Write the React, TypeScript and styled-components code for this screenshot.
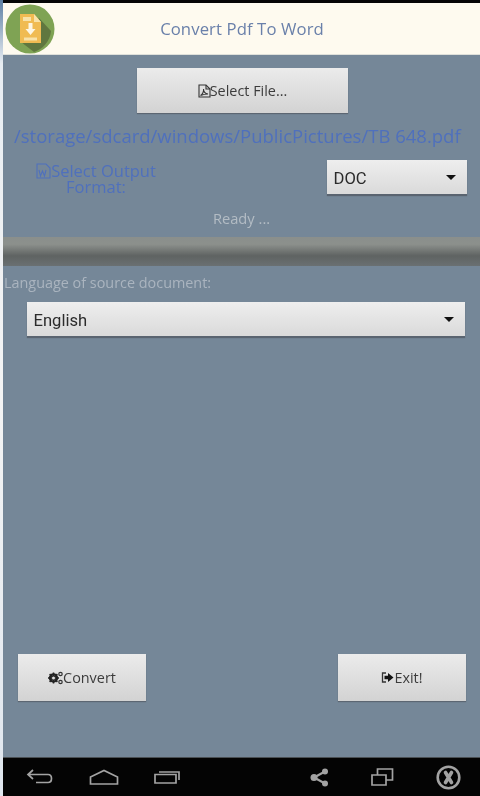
import React from "react";
import styled, { createGlobalStyle } from "styled-components";

const GlobalStyle = createGlobalStyle`
  html, body {
    margin: 0;
    padding: 0;
    background: #000;
  }
  #root {
    width: 480px;
    height: 796px;
    overflow: hidden;
  }
`;

const Screen = styled.div`
  width: 480px;
  height: 796px;
  display: flex;
  font-family: "Open Sans", "Noto Sans", sans-serif;
  filter: blur(0.5px);
`;

const EdgeStrip = styled.div`
  width: 3px;
  flex: none;
  background: linear-gradient(#5d7fa3 0, #e8edf2 8%, #f4f4f4 50%, #dfe6ee 100%);
`;

const Main = styled.div`
  flex: 1;
  min-width: 0;
  display: flex;
  flex-direction: column;
`;

const StatusEdge = styled.div`
  height: 3px;
  flex: none;
  background: #050505;
`;

const Header = styled.header`
  height: 52px;
  flex: none;
  display: flex;
  align-items: center;
  background: #fefaef;
  border-bottom: 1px solid #dfe0da;
  box-sizing: border-box;
  position: relative;
`;

const Logo = styled.svg`
  position: absolute;
  left: 2px;
  top: 1px;
  width: 50px;
  height: 50px;
`;

const Title = styled.h1`
  margin: 0;
  width: 100%;
  padding-left: 1px;
  box-sizing: border-box;
  text-align: center;
  font-size: 16.7px;
  font-weight: 400;
  letter-spacing: 0.1px;
  color: #6a80aa;
`;

const Content = styled.main`
  flex: 1;
  min-height: 0;
  display: flex;
  flex-direction: column;
  background: #758798;
`;

const RaisedButton = styled.button<{ $width: number; $height: number }>`
  width: ${(p) => p.$width}px;
  height: ${(p) => p.$height}px;
  padding: 0;
  border: none;
  display: flex;
  align-items: center;
  justify-content: center;
  font-family: inherit;
  font-size: 14.4px;
  color: #3c3c3c;
  background: linear-gradient(#ebebeb, #d3d3d3);
  box-shadow: 0 1px 1px #5c6672;
`;

const FileRow = styled.div`
  display: flex;
  justify-content: center;
  padding: 13px 0 0 2px;
`;

const PathText = styled.div`
  margin-top: 10px;
  padding-left: 11px;
  height: 25px;
  line-height: 25px;
  font-size: 18.5px;
  white-space: nowrap;
  color: #4f70bd;
`;

const FormatRow = styled.div`
  display: flex;
  align-items: flex-start;
  margin-top: 12px;
  height: 36px;
`;

const FormatLabel = styled.div`
  width: 186px;
  margin-right: 138px;
  padding-top: 3px;
  text-align: center;
  font-size: 16.5px;
  line-height: 16px;
  color: #4f70bd;
`;

const Spinner = styled.div<{ $width: number; $height: number }>`
  width: ${(p) => p.$width}px;
  height: ${(p) => p.$height}px;
  flex: none;
  display: flex;
  align-items: center;
  justify-content: space-between;
  box-sizing: border-box;
  padding: 2px 11px 0 6.5px;
  font-family: Roboto, sans-serif;
  font-size: 16.6px;
  color: #2b2b2b;
  background: linear-gradient(#eeeeee, #dadada);
  box-shadow: 0 2px 1px #5a6470;
`;

const Caret = styled.span`
  width: 0;
  height: 0;
  margin-top: -2px;
  border-left: 5px solid transparent;
  border-right: 5px solid transparent;
  border-top: 5px solid #111;
`;

const Status = styled.div`
  margin-top: 12px;
  height: 20px;
  line-height: 20px;
  text-align: center;
  font-size: 14.7px;
  color: #b3bcc4;
`;

const ProgressBar = styled.div`
  margin-top: 9px;
  height: 29px;
  background: linear-gradient(#8a8f8c 0, #8c908c 25%, #5f6362 65%, #6a7072 100%);
`;

const SourceLabel = styled.div`
  margin-top: 7px;
  padding-left: 1px;
  height: 20px;
  line-height: 20px;
  font-size: 14.4px;
  color: #aab4bf;
`;

const SourceRow = styled.div`
  margin-top: 9px;
  padding-left: 24px;
`;

const ActionRow = styled.div`
  margin-top: auto;
  display: flex;
  justify-content: space-between;
  padding: 0 14px 56px 15px;
`;

const NavBar = styled.nav`
  height: 39px;
  flex: none;
  display: flex;
  align-items: center;
  background: #040404;
  border-top: 1px solid #4a4f53;
  box-sizing: border-box;
`;

const NavCluster = styled.div<{ $gap: number; $left: number }>`
  display: flex;
  align-items: center;
  gap: ${(p) => p.$gap}px;
  margin-left: ${(p) => p.$left}px;
`;

const NavIcon = styled.svg`
  display: block;
  fill: none;
  stroke: #a3a3a3;
  stroke-width: 1.7;
`;

const InlineIcon = styled.svg`
  display: block;
  flex: none;
`;

const OverlapIcon = styled(InlineIcon)`
  margin-right: -1px;
`;

const FormatIcon = styled.svg`
  display: inline-block;
  vertical-align: -2px;
`;

const PdfIcon = () => (
  <OverlapIcon width="13" height="14" viewBox="0 0 13 14" fill="none" stroke="#333" strokeWidth="1.1">
    <path d="M1 1h7l4 4v8H1z" />
    <path d="M8 1v4h4" />
    <path d="M2.500 11.500c2-1 3.500-4 3-6.500 0 3 1.500 4.500 4.500 5-3 0-5 .5-7.500 1.500z" />
  </OverlapIcon>
);

const WordIcon = () => (
  <FormatIcon width="15" height="16" viewBox="0 0 15 16" fill="none" stroke="#4f70bd" strokeWidth="1.1">
    <path d="M1 1h9l4 4v10H1z" />
    <path d="M3 7l1.500 6 2-5 2 5L10 7" />
  </FormatIcon>
);

const GearsIcon = () => (
  <InlineIcon width="15" height="14" viewBox="0 0 15 14">
    <circle cx="5.500" cy="7" r="3.600" fill="none" stroke="#222" strokeWidth="2.200" />
    <path d="M5.500 1.500v11M0 7h11M1.600 3.100l7.800 7.800M9.400 3.100l-7.800 7.800" stroke="#222" strokeWidth="1.500" />
    <circle cx="5.500" cy="7" r="1.500" fill="#e0e0e0" />
    <circle cx="12.500" cy="3" r="1.700" fill="none" stroke="#333" strokeWidth="1.200" />
    <circle cx="12.500" cy="11" r="1.700" fill="none" stroke="#333" strokeWidth="1.200" />
  </InlineIcon>
);

const ExitIcon = () => (
  <InlineIcon width="13" height="11" viewBox="0 0 13 11">
    <path d="M5 1H1.500v9H5" fill="none" stroke="#333" strokeWidth="1.300" />
    <path d="M3.500 3.800H7V1l5.500 4.500L7 10V7.200H3.500z" fill="#111" />
  </InlineIcon>
);

const AppLogo = () => (
  <Logo viewBox="0 0 50 50">
    <circle cx="25" cy="25" r="24.500" fill="#7fa354" />
    <path d="M34 14l12 13a24.500 24.500 0 0 1-17 21L16 38z" fill="#60773f" />
    <path d="M15 10h14l7 8v21H15z" fill="#f0bb52" />
    <path d="M29 10l7 8h-7z" fill="#f8e2a8" />
    <rect x="18" y="13" width="8" height="4" fill="#f8e2a8" />
    <path d="M23.500 19h4v6h3l-5 6-5-6h3z" fill="#fdf6e3" />
    <rect x="19" y="33.500" width="13" height="3" fill="#f8e2a8" />
  </Logo>
);

export default function App() {
  return (
    <Screen>
      <GlobalStyle />
      <EdgeStrip />
      <Main>
        <StatusEdge />
        <Header>
          <AppLogo />
          <Title>Convert Pdf To Word</Title>
        </Header>
        <Content>
          <FileRow>
            <RaisedButton $width={211} $height={45}>
              <PdfIcon />
              Select File...
            </RaisedButton>
          </FileRow>
          <PathText>/storage/sdcard/windows/PublicPictures/TB 648.pdf</PathText>
          <FormatRow>
            <FormatLabel>
              <WordIcon />
              Select Output
              <br />
              Format:
            </FormatLabel>
            <Spinner $width={140} $height={34}>
              DOC
              <Caret />
            </Spinner>
          </FormatRow>
          <Status>Ready ...</Status>
          <ProgressBar />
          <SourceLabel>Language of source document:</SourceLabel>
          <SourceRow>
            <Spinner $width={438} $height={34}>
              English
              <Caret />
            </Spinner>
          </SourceRow>
          <ActionRow>
            <RaisedButton $width={128} $height={47}>
              <GearsIcon />
              Convert
            </RaisedButton>
            <RaisedButton $width={128} $height={47}>
              <ExitIcon />
              Exit!
            </RaisedButton>
          </ActionRow>
        </Content>
        <NavBar>
          <NavCluster $gap={35} $left={23}>
            <NavIcon width="28" height="18" viewBox="0 0 28 18">
              <path d="M7 2L2 6.500 7 11M2 6.500h20c2.500 0 3.500 1.500 3.500 4s-1 4-3.500 4H10" />
            </NavIcon>
            <NavIcon width="30" height="16" viewBox="0 0 30 16">
              <path d="M1.500 8L15 1.500 28.500 8v7h-27z" />
            </NavIcon>
            <NavIcon width="28" height="14" viewBox="0 0 28 14">
              <path d="M1 4.500h21v8.500H1zM5 2h20v8" />
            </NavIcon>
          </NavCluster>
          <NavCluster $gap={42} $left={128}>
            <NavIcon width="19" height="19" viewBox="0 0 19 19">
              <path d="M15 3.500L4 9.500l11 6" strokeWidth="2.200" />
              <circle cx="15" cy="3.500" r="3" fill="#a3a3a3" stroke="none" />
              <circle cx="4" cy="9.500" r="3.500" fill="#a3a3a3" stroke="none" />
              <circle cx="15" cy="15.500" r="3" fill="#a3a3a3" stroke="none" />
            </NavIcon>
            <NavIcon width="23" height="18" viewBox="0 0 23 18">
              <path d="M6.500 7V1h15v11h-6M1 7h14v10H1z" />
            </NavIcon>
            <NavIcon width="25" height="25" viewBox="0 0 25 25">
              <circle cx="12.500" cy="12.500" r="10.800" strokeWidth="2.600" />
              <path d="M9.500 7.500l6 10M15.500 7.500l-6 10" strokeWidth="3.600" strokeLinecap="round" />
            </NavIcon>
          </NavCluster>
        </NavBar>
      </Main>
    </Screen>
  );
}
